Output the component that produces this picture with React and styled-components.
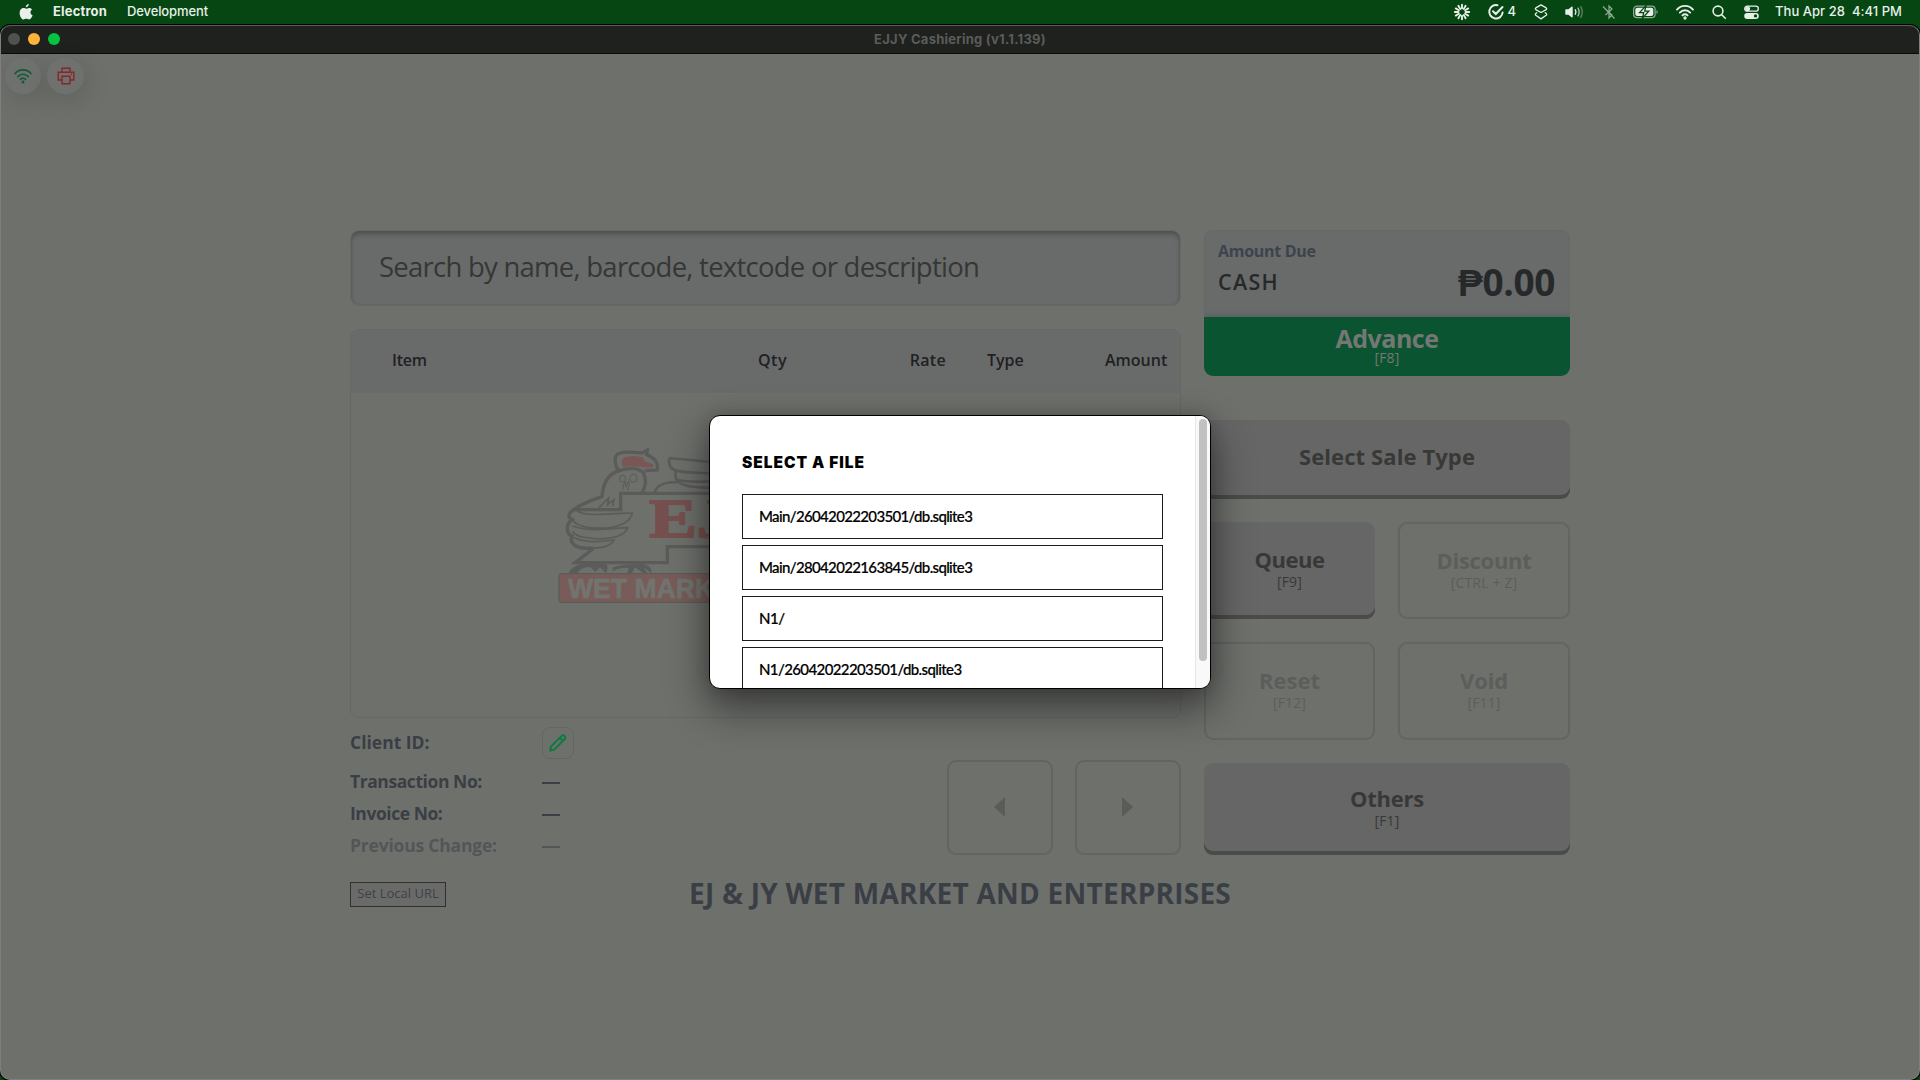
import React from "react";
import styled, { createGlobalStyle } from "styled-components";

const Global = createGlobalStyle`
  * { box-sizing: border-box; }
  html, body { margin: 0; padding: 0; background: #054613; overflow: hidden; }
  button { font: inherit; color: inherit; padding: 0; margin: 0; border: 0; background: none; }
`;

const Text = styled.span`
  white-space: pre;
  letter-spacing: ${(p) => p.$ls || 0}px;
`;

const Desktop = styled.div`
  width: 1920px;
  height: 1080px;
  display: flex;
  flex-direction: column;
  background: #054613;
  font-family: "Open Sans", sans-serif;
  overflow: hidden;
`;

const MenuBar = styled.div`
  height: 24px;
  flex: none;
  display: flex;
  align-items: center;
  justify-content: space-between;
  padding: 0 18px 0 19px;
  color: #e8efe9;
  font: 500 13px/21px Inter, sans-serif;
`;

const MenuGroup = styled.div`
  display: flex;
  align-items: center;
  height: 23px;
`;

const MenuItem = styled.span`
  margin-left: ${(p) => p.$ml}px;
  padding-bottom: 2px;
  font-weight: ${(p) => (p.$bold ? 700 : 500)};
  letter-spacing: ${(p) => p.$ls || 0}px;
  white-space: pre;
`;

const Glyph = styled.svg`
  display: block;
  flex: none;
  width: ${(p) => p.$w}px;
  height: ${(p) => p.$h || 16}px;
  margin-left: ${(p) => p.$ml || 0}px;
  overflow: visible;
`;

const Window = styled.div`
  flex: 1;
  display: flex;
  flex-direction: column;
  border: 1px solid #7e807d;
  border-top-color: #5c5d5b;
  border-radius: 10px;
  margin-top: 1px;
  background: #6e706c;
  box-shadow: 0 0 0 1px #000;
  overflow: hidden;
`;

const TitleBar = styled.div`
  height: 28px;
  flex: none;
  display: grid;
  grid-template-columns: 1fr auto 1fr;
  align-items: center;
  padding: 0 7px 1px 7px;
  background: #1f211e;
  border-bottom: 1px solid #0a0b0a;
  color: #5b5c5a;
  font: 700 13px/24px Inter, sans-serif;
`;

const WindowTitle = styled.span`
  padding-bottom: 1px;
  letter-spacing: 0.25px;
`;

const Lights = styled.div`
  display: flex;
  gap: 8px;
`;

const Light = styled.i`
  width: 12px;
  height: 12px;
  border-radius: 50%;
  background: ${(p) => p.$c};
`;

const StatusRow = styled.div`
  display: flex;
  gap: 6px;
  padding: 4px 0 0 4px;
  height: 40px;
`;

const StatusBadge = styled.div`
  width: ${(p) => p.$w || 36}px;
  height: 36px;
  border-radius: 50%;
  background: #6f716e;
  display: flex;
  align-items: center;
  justify-content: center;
  box-shadow: 3px 7px 26px rgba(0, 0, 0, 0.14);
`;

const Main = styled.main`
  width: 1220px;
  margin: 136px 0 0 349px;
  display: grid;
  grid-template-columns: 831px 366px;
  column-gap: 23px;
`;

const Column = styled.div`
  display: flex;
  flex-direction: column;
`;

const SearchBox = styled.div`
  height: 76px;
  border: 1px solid #676967;
  border-radius: 9px;
  background: #696b6a;
  box-shadow: inset 0 4px 5px -1px #4d504e, inset 1px 0 2px #626468, inset -1px 0 2px #5f6166;
  padding: 0 0 2px 28px;
  display: flex;
  align-items: center;
  color: #353735;
  font-size: 27.5px;
  line-height: 40px;
`;

const Table = styled.div`
  height: 389px;
  margin-top: 23px;
  border: 1px solid #666866;
  border-radius: 9px;
  overflow: hidden;
`;

const TableHead = styled.div`
  height: 63px;
  display: grid;
  grid-template-columns: 366px 110px 119px 118px 104px;
  align-items: center;
  padding: 0 0 3px 41px;
  background: #696b6a;
  color: #1f2124;
  font-size: 16px;
  font-weight: 650;
`;

const HeadCell = styled.span`
  text-align: ${(p) => p.$align || "left"};
  padding-right: ${(p) => p.$pr || 0}px;
`;

const TableBody = styled.div`
  display: flex;
  justify-content: center;
  padding-top: 55px;
`;

const Details = styled.div`
  display: flex;
  justify-content: space-between;
  height: 137px;
`;

const InfoList = styled.div`
  padding-top: 9px;
`;

const InfoRow = styled.div`
  display: grid;
  grid-template-columns: 192px auto;
  align-items: center;
  height: ${(p) => p.$h}px;
  margin-top: ${(p) => p.$mt || 0}px;
  color: ${(p) => (p.$muted ? "#545558" : "#3a3e45")};
`;

const InfoLabel = styled.span`
  padding-bottom: ${(p) => p.$pb || 4}px;
  font-size: 17.5px;
  font-weight: 700;
  letter-spacing: ${(p) => p.$ls}px;
`;

const Dash = styled.i`
  width: 18px;
  height: 2px;
  background: currentColor;
`;

const EditButton = styled.button`
  width: 32px;
  height: 32px;
  border: 1px solid #646662;
  border-radius: 8px;
  display: flex;
  align-items: center;
  justify-content: center;
`;

const Pager = styled.div`
  display: flex;
  gap: 22px;
  padding-top: 42px;
`;

const PagerButton = styled.button`
  width: 106px;
  height: 95px;
  padding: 0 1px 2px 0;
  border: 2px solid #636561;
  border-radius: 9px;
  display: flex;
  align-items: center;
  justify-content: center;
`;

const DueCard = styled.div`
  height: 87px;
  border: 1px solid #666866;
  border-bottom: 0;
  border-radius: 9px 9px 0 0;
  background: linear-gradient(#696b6b 92%, #5c635f);
  padding: 10px 14px 0 13px;
`;

const DueLabel = styled.div`
  color: #3d434c;
  font-size: 16px;
  font-weight: 700;
  line-height: 20px;
  letter-spacing: -0.3px;
`;

const DueRow = styled.div`
  display: flex;
  justify-content: space-between;
  align-items: center;
  height: 41px;
  color: #26282a;
  line-height: 40px;
`;

const DueMode = styled.span`
  font-size: 21.5px;
  font-weight: 650;
  letter-spacing: 1.3px;
`;

const DueValue = styled.span`
  font-size: 37px;
  font-weight: 700;
  letter-spacing: -0.35px;
`;

const ActionButton = styled.button`
  display: flex;
  flex-direction: column;
  align-items: center;
  justify-content: center;
  font-weight: 700;
  font-size: 22px;
  line-height: 26px;
  border-radius: 9px;
  height: ${(p) => p.$h}px;
  ${(p) =>
    p.$kind === "primary" &&
    `background:#0a5431; color:#757774; border-radius:0 0 9px 9px; font-size:25px; padding-bottom:4px; margin-bottom:44px;`}
  ${(p) =>
    p.$kind === "solid" &&
    `background:#666666; color:#373936; box-shadow: inset 0 -4px 0 #4b4b4a; padding-bottom:${p.$pb || 4}px;`}
  ${(p) => p.$kind === "ghost" && `border:2px solid #636561; color:#5c5e5b; padding-bottom:3px;`}
`;

const Shortcut = styled.span`
  font-size: 14px;
  font-weight: 400;
  letter-spacing: 0.15px;
  line-height: ${(p) => p.$lh || 19}px;
`;

const ActionGrid = styled.div`
  display: grid;
  grid-template-columns: 171px 172px;
  gap: 23px;
  margin: 23px 0;
`;

const Footer = styled.footer`
  width: 1220px;
  margin: 27px 0 0 349px;
  display: grid;
  grid-template-columns: 1fr auto 1fr;
  align-items: center;
  height: 25px;
`;

const UrlButton = styled.button`
  justify-self: start;
  width: 96px;
  height: 25px;
  border: 1px solid #2f312f;
  background: #6a6b69;
  color: #3d4148;
  font-size: 13px;
  line-height: 18px;
  padding-bottom: 3px;
`;

const StoreName = styled.h1`
  margin: 0;
  color: #3a3f46;
  font-size: 28px;
  font-weight: 700;
  line-height: 23px;
  letter-spacing: 0.25px;
  padding-bottom: 2px;
`;

const Dialog = styled.div`
  position: absolute;
  left: 709px;
  top: 415px;
  width: 502px;
  height: 274px;
  border: 1px solid #000;
  border-radius: 11px;
  background: #fff;
  overflow: hidden;
  display: flex;
  box-shadow: 0 18px 40px 2px rgba(0, 0, 0, 0.46), 0 0 18px rgba(0, 0, 0, 0.16);
  font-family: Lato, sans-serif;
  color: #000;
`;

const DialogBody = styled.div`
  flex: 1;
  padding: 37px 32px 0 32px;
`;

const DialogTitle = styled.h2`
  margin: 0 0 21px;
  font-family: Inter, sans-serif;
  font-size: 15.5px;
  font-weight: 900;
  line-height: 20px;
  letter-spacing: 0.95px;
`;

const FileRow = styled.div`
  height: 45px;
  border: 1px solid #1c1c1e;
  margin-bottom: 6px;
  padding-left: 16px;
  font-size: 15px;
  font-weight: 500;
  line-height: 42px;
  letter-spacing: ${(p) => p.$ls}px;
  -webkit-text-stroke: 0.2px #000;
`;

const ScrollTrack = styled.div`
  width: 15px;
  border-left: 1px solid #e6e6e6;
  background: #f9f9f9;
  padding: 3px 2px 0 3px;
`;

const ScrollThumb = styled.div`
  width: 8px;
  height: 242px;
  border-radius: 4px;
  background: #c1c1c1;
`;

function Logo() {
  return (
    <svg width="415" height="155" viewBox="54 54 1245 465" fill="none" stroke="#5b5c5a" strokeWidth="10">
      <path d="M186 204C188 160 206 128 244 120C270 112 296 114 310 128C320 148 318 168 306 188" />
      <path d="M236 122C222 104 220 74 240 69C262 62 290 70 308 68L322 60L320 74C342 82 356 98 352 120L314 122" />
      <path d="M250 112C240 96 246 80 264 80C284 76 300 80 312 84C306 92 316 94 338 102L342 110C310 118 276 102 250 112Z" fill="#7a5755" stroke="none" />
      <g strokeWidth="3">
        <ellipse cx="248" cy="146" rx="9" ry="11" />
        <ellipse cx="280" cy="145" rx="11" ry="12" />
        <path d="M258 154Q246 164 249 180M257 156L258 172L264 156M266 152Q270 166 263 182" />
        <path d="M176 234L206 204L203 224L222 209L218 228" strokeWidth="5" />
      </g>
      <path d="M96 239H242V190H960" />
      <path d="M186 200C150 212 118 224 100 240C85 250 82 262 96 268C76 284 78 312 96 318C86 342 112 358 152 354" />
      <path d="M112 244C150 264 230 246 277 250C272 276 230 298 170 294C130 294 108 284 98 270M98 288C150 308 220 294 263 293C256 320 200 332 150 324C122 322 104 318 98 304M98 322C140 342 190 334 222 330C214 348 180 358 150 352" strokeWidth="5" />
      <path d="M160 355L106 398H382V350H960" />
      <path d="M345 188C348 166 370 156 412 156M388 84C420 88 470 90 520 97M388 84C384 106 394 118 410 122C440 130 480 128 520 130M408 124C402 146 414 160 436 166C460 174 490 172 520 174M412 150C440 156 480 156 520 154" strokeWidth="8" />
      <path d="M86 430C92 410 118 400 140 402L200 402Q206 414 198 430L180 412L166 426L150 410Q120 412 112 430ZM218 412C246 404 268 402 306 402C328 406 338 416 334 430L310 412L322 430H310L284 412L276 430H262L266 414Q244 410 218 424Z" fill="#5b5c5a" stroke="none" />
      <rect x="57" y="431" width="1239" height="86" rx="10" fill="#785c59" strokeWidth="4" />
      <text
        transform="translate(328 321) scale(1.32 1)"
        fontFamily='"Liberation Serif", serif'
        fontWeight="700"
        fontSize="162"
        fill="#76504e"
        stroke="#76504e"
        strokeWidth="6"
      >
        EJ&amp;JY
      </text>
      <text
        x="84"
        y="504"
        fontFamily='"Liberation Sans", sans-serif'
        fontWeight="700"
        fontSize="82"
        fill="#72746f"
        stroke="#72746f"
        strokeWidth="2"
        textLength="540"
        lengthAdjust="spacingAndGlyphs"
      >
        WET MARKET
      </text>
    </svg>
  );
}

const WifiArcs = ({ color, w }) => (
  <g fill="none" stroke={color} strokeWidth={w} strokeLinecap="round">
    <path d="M1 5.600a10.500 10.500 0 0 1 16 0M3.800 8.600a7 7 0 0 1 10.400 0M6.400 11.400a3.600 3.600 0 0 1 5.200 0" />
    <circle cx="9" cy="14" r=".7" fill={color} />
  </g>
);

const RAYS = Array.from({ length: 12 }, (_, i) => i * 30);

const FILES = [
  ["Main/26042022203501/db.sqlite3", -0.65],
  ["Main/28042022163845/db.sqlite3", -0.65],
  ["N1/", -0.5],
  ["N1/26042022203501/db.sqlite3", -0.61],
];

export default function App() {
  return (
    <Desktop>
      <Global />
      <MenuBar>
        <MenuGroup>
          <Glyph $w={14} $h={17} viewBox="0 0 14 17" fill="#e8efe9">
            <path d="M9.800 0c.1 1.700-1.400 3.300-3 3.300C6.600 1.700 8.200.2 9.800 0zM7.200 4.700c.6 0 1.500-.8 2.900-.8 1.300 0 2.400.7 3 1.600-2.400 1.500-2 4.800.5 5.800-.6 1.900-2 4.200-3.500 4.200-1.100 0-1.500-.7-2.800-.7s-1.800.7-2.800.7C2.700 15.500.6 12 .6 8.900c0-3.200 2-4.900 3.900-4.900 1.200 0 2.100.7 2.700.7z" />
          </Glyph>
          <MenuItem $ml={20} $bold $ls={0.17}>Electron</MenuItem>
          <MenuItem $ml={20} $ls={-0.11}>Development</MenuItem>
        </MenuGroup>
        <MenuGroup>
          <Glyph $w={16} viewBox="-8 -8 16 16" stroke="#e8efe9" strokeWidth="1.900" strokeLinecap="round" fill="none">
            {RAYS.map((a) => (
              <path key={a} d="M0 -3.600V-7.200" transform={`rotate(${a})`} />
            ))}
          </Glyph>
          <Glyph $w={16} $ml={18} viewBox="0 0 16 16" stroke="#e8efe9" strokeWidth="2" strokeLinecap="round" fill="none">
            <path d="M9.500 1.300A6.700 6.700 0 1 0 14.600 8.500M5 7.200l2.800 2.800L14.500 3" />
          </Glyph>
          <MenuItem $ml={4}>4</MenuItem>
          <Glyph $w={14} $ml={18} viewBox="0 0 14 16" stroke="#e8efe9" strokeWidth="1.300" strokeLinejoin="round" strokeLinecap="round" fill="none">
            <path d="M7 .9l5.200 3q1 .8 0 1.700L7 8.500 1.800 5.600q-1-.9 0-1.700zM2.800 8.800l-1 .8q-1 .9 0 1.700L7 14.900l5.200-3.600q1-.8 0-1.700l-1-.8" />
          </Glyph>
          <Glyph $w={19} $ml={17} viewBox="0 0 19 16" stroke="#e8efe9" strokeWidth="1.400" strokeLinecap="round" fill="none">
            <path d="M1 6h2.500L7 3.200v9.600L3.500 10H1z" fill="#e8efe9" strokeLinejoin="round" />
            <path d="M10.300 5.800q1.400 2.200 0 4.400" />
            <path d="M13 4.200q2.300 3.800 0 7.600" opacity=".7" />
            <path d="M15.700 2.700q3.200 5.300 0 10.600" opacity=".35" />
          </Glyph>
          <Glyph $w={12} $ml={19} viewBox="0 0 12 16" stroke="#8fac95" strokeWidth="1.200" fill="none">
            <path d="M2.500 5l6.500 6-3 3V2l3 3-6.500 6M0 2.500l11.500 12" />
          </Glyph>
          <Glyph $w={25} $ml={18} viewBox="0 0 25 16" fill="none">
            <rect x=".6" y="2.100" width="21.500" height="11.500" rx="3.400" stroke="#8fac95" strokeWidth="1.200" />
            <rect x="2.300" y="3.800" width="18" height="8.100" rx="2" fill="#e8efe9" />
            <path d="M13 1.600 6.600 8.600h4.100l-1.300 5.600 6.400-7h-4.100z" fill="#e8efe9" stroke="#054613" strokeWidth="1.300" />
            <path d="M23.500 6v4q1.200-.6 1.200-2t-1.200-2z" fill="#8fac95" />
          </Glyph>
          <Glyph $w={18} $ml={18} viewBox="0 0 18 16">
            <WifiArcs color="#e8efe9" w="1.900" />
          </Glyph>
          <Glyph $w={14} $ml={18} viewBox="0 0 14 16" stroke="#e8efe9" strokeWidth="1.600" fill="none" strokeLinecap="round">
            <circle cx="6" cy="7" r="4.900" />
            <path d="M9.700 10.700l3.600 3.600" />
          </Glyph>
          <Glyph $w={15} $ml={18} viewBox="0 0 15 16" fill="none" stroke="#e8efe9" strokeWidth="1.300">
            <rect x=".7" y="2.200" width="13.600" height="5" rx="2.500" />
            <circle cx="3.700" cy="4.700" r="1.800" fill="#e8efe9" />
            <rect x=".2" y="8.900" width="14.600" height="6" rx="3" fill="#e8efe9" stroke="none" />
            <circle cx="11.500" cy="11.900" r="1.700" fill="#054613" stroke="none" />
          </Glyph>
          <MenuItem $ml={16} $ls={0.04}>{"Thu Apr 28  4:41 PM"}</MenuItem>
        </MenuGroup>
      </MenuBar>
      <Window>
        <TitleBar>
          <Lights>
            <Light $c="#50524f" />
            <Light $c="#ffb339" />
            <Light $c="#04c341" />
          </Lights>
          <WindowTitle>EJJY Cashiering (v1.1.139)</WindowTitle>
        </TitleBar>
        <StatusRow>
          <StatusBadge>
            <Glyph $w={18} viewBox="0 0 18 16">
              <WifiArcs color="#125a38" w="1.600" />
            </Glyph>
          </StatusBadge>
          <StatusBadge $w={37}>
            <Glyph $w={18} $h={18} viewBox="0 0 18 18" fill="none" stroke="#84262c" strokeWidth="1.400">
              <path d="M5 5.200V1.200h8v4M5 13H1.200V5.200h15.600V13H13M5 9.200h8v7.600H5z" />
              <path d="M14 7.300h1" />
            </Glyph>
          </StatusBadge>
        </StatusRow>
        <Main>
          <Column>
            <SearchBox>
              <Text $ls={-0.75}>Search by name, barcode, textcode or description</Text>
            </SearchBox>
            <Table>
              <TableHead>
                <HeadCell><Text $ls={-0.25}>Item</Text></HeadCell>
                <HeadCell><Text $ls={0.5}>Qty</Text></HeadCell>
                <HeadCell $align="right" $pr={41}><Text $ls={0.3}>Rate</Text></HeadCell>
                <HeadCell>Type</HeadCell>
                <HeadCell>Amount</HeadCell>
              </TableHead>
              <TableBody>
                <Logo />
              </TableBody>
            </Table>
            <Details>
              <InfoList>
                <InfoRow $h={32}>
                  <InfoLabel $pb={2} $ls={0}>Client ID:</InfoLabel>
                  <EditButton>
                    <Glyph $w={18} $h={18} viewBox="0 0 18 18" fill="none" stroke="#0a7a41" strokeWidth="1.900" strokeLinejoin="round">
                      <path d="M1.300 16.700l.6-4.100L12.700 1.900q1.500-1.200 2.900.2t.2 2.900L5.200 15.700zM11 3.800l3 3" />
                    </Glyph>
                  </EditButton>
                </InfoRow>
                <InfoRow $h={32} $mt={8}>
                  <InfoLabel $ls={-0.43}>Transaction No:</InfoLabel>
                  <Dash />
                </InfoRow>
                <InfoRow $h={32}>
                  <InfoLabel $ls={-0.45}>Invoice No:</InfoLabel>
                  <Dash />
                </InfoRow>
                <InfoRow $h={31} $muted>
                  <InfoLabel $ls={-0.2}>Previous Change:</InfoLabel>
                  <Dash />
                </InfoRow>
              </InfoList>
              <Pager>
                <PagerButton>
                  <Glyph $w={11} $h={20} viewBox="0 0 11 20" fill="#5a5c58"><path d="M11 0v20L0 10z" /></Glyph>
                </PagerButton>
                <PagerButton>
                  <Glyph $w={11} $h={20} viewBox="0 0 11 20" fill="#5a5c58"><path d="M0 0v20L11 10z" /></Glyph>
                </PagerButton>
              </Pager>
            </Details>
          </Column>
          <Column>
            <DueCard>
              <DueLabel>Amount Due</DueLabel>
              <DueRow>
                <DueMode>CASH</DueMode>
                <DueValue>₱0.00</DueValue>
              </DueRow>
            </DueCard>
            <ActionButton $kind="primary" $h={59}>
              <Text $ls={-0.49}>Advance</Text>
              <Shortcut $lh={14}>[F8]</Shortcut>
            </ActionButton>
            <ActionButton $kind="solid" $h={79} $pb={8}>
              <Text $ls={0.1}>Select Sale Type</Text>
            </ActionButton>
            <ActionGrid>
              <ActionButton $kind="solid" $h={97}>
                <Text $ls={-0.45}>Queue</Text>
                <Shortcut>[F9]</Shortcut>
              </ActionButton>
              <ActionButton $kind="ghost" $h={97}>
                <Text $ls={-0.3}>Discount</Text>
                <Shortcut>[CTRL + Z]</Shortcut>
              </ActionButton>
              <ActionButton $kind="ghost" $h={98}>
                <Text>Reset</Text>
                <Shortcut>[F12]</Shortcut>
              </ActionButton>
              <ActionButton $kind="ghost" $h={98}>
                <Text $ls={-0.14}>Void</Text>
                <Shortcut>[F11]</Shortcut>
              </ActionButton>
            </ActionGrid>
            <ActionButton $kind="solid" $h={92}>
              <Text $ls={-0.24}>Others</Text>
              <Shortcut>[F1]</Shortcut>
            </ActionButton>
          </Column>
        </Main>
        <Footer>
          <UrlButton>Set Local URL</UrlButton>
          <StoreName>EJ &amp; JY WET MARKET AND ENTERPRISES</StoreName>
        </Footer>
      </Window>
      <Dialog>
        <DialogBody>
          <DialogTitle>SELECT A FILE</DialogTitle>
          {FILES.map(([name, ls]) => (
            <FileRow key={name} $ls={ls}>{name}</FileRow>
          ))}
        </DialogBody>
        <ScrollTrack>
          <ScrollThumb />
        </ScrollTrack>
      </Dialog>
    </Desktop>
  );
}
